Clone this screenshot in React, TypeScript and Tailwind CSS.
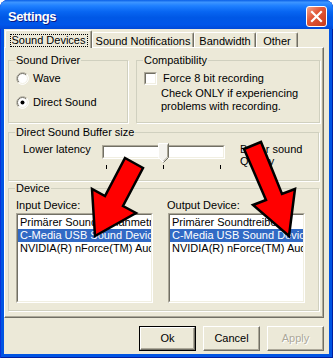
import React from 'react';

function Radio({ checked }: { checked?: boolean }) {
  return (
    <svg width="13" height="13" viewBox="0 0 13 13" className="shrink-0">
      <circle cx="6.5" cy="6.5" r="6" fill="#fff" />
      <path d="M2.26 10.74 A6 6 0 0 1 10.74 2.26" stroke="#ACA899" fill="none" />
      <path d="M10.74 2.26 A6 6 0 0 1 2.26 10.74" stroke="#fff" fill="none" />
      <path d="M2.96 10.04 A5 5 0 0 1 10.04 2.96" stroke="#716F64" fill="none" />
      <path d="M10.04 2.96 A5 5 0 0 1 2.96 10.04" stroke="#F1EFE2" fill="none" />
      {checked && <circle cx="6.5" cy="6.5" r="2" fill="#000" />}
    </svg>
  );
}

function Checkbox() {
  return (
    <div className="w-[13px] h-[13px] shrink-0 border border-t-[#ACA899] border-l-[#ACA899] border-r-white border-b-white">
      <div className="w-full h-full border border-t-[#716F64] border-l-[#716F64] border-r-[#F1EFE2] border-b-[#F1EFE2] bg-white" />
    </div>
  );
}

function ListBox({ items, selected }: { items: string[]; selected: number }) {
  return (
    <div className="mt-[1px] w-[137px] h-[90px] border border-t-[#ACA899] border-l-[#ACA899] border-r-white border-b-white">
      <div className="w-full h-full pt-[1px] bg-white border border-t-[#716F64] border-l-[#716F64] border-r-[#F1EFE2] border-b-[#F1EFE2] overflow-hidden">
        {items.map((it, i) => (
          <div
            key={it}
            className={
              i === selected
                ? 'h-[13px] pl-[2px] whitespace-nowrap overflow-hidden bg-[#316AC5] text-white'
                : 'h-[13px] pl-[2px] whitespace-nowrap overflow-hidden'
            }
          >
            {it}
          </div>
        ))}
      </div>
    </div>
  );
}

function Button({ label, isDefault, disabled }: { label: string; isDefault?: boolean; disabled?: boolean }) {
  const inner =
    'w-full h-full flex items-center justify-center border border-t-white border-l-white border-r-[#716F64] border-b-[#716F64] shadow-[inset_-1px_-1px_0_#ACA899]';
  return (
    <div className={isDefault ? 'w-[57px] h-[25px] border border-black' : 'w-[57px] h-[25px]'}>
      <div className={inner}>
        <span className={disabled ? 'text-[#ACA899] [text-shadow:1px_1px_0_#fff]' : ''}>{label}</span>
      </div>
    </div>
  );
}

export default function App() {
  const inputItems = ['Primärer Soundaufnahmetreiber', 'C-Media USB Sound Device', 'NVIDIA(R) nForce(TM) Audio'];
  const outputItems = ['Primärer Soundtreiber', 'C-Media USB Sound Device', 'NVIDIA(R) nForce(TM) Audio'];

  return (
    <div className="relative w-[333px] h-[358px] overflow-hidden bg-white font-['Liberation_Sans',Arial,sans-serif] text-[11px] leading-[13px] text-black">
      <div className="w-[333px] h-[358px] rounded-t-[8px] bg-[#0054E3] shadow-[inset_1px_0_0_#0831D9,inset_-1px_0_0_#001EA0,inset_0_-1px_0_#001EA0] flex flex-col pb-[4px]">
        {/* Title bar */}
        <div className="h-[29px] shrink-0 rounded-t-[8px] flex items-center justify-between pl-[8px] pr-[6px] pt-[3px] bg-[linear-gradient(to_bottom,#0a5fe6_0%,#3d95ff_8%,#1f80ff_20%,#0866f2_40%,#0058e6_60%,#0056ea_85%,#0049d8_100%)]">
          <span className="text-white font-bold text-[13px] tracking-[-0.4px] [text-shadow:1px_1px_0_#0A1883]">
            Settings
          </span>
          <div className="w-[21px] h-[21px] rounded-[3px] border border-white bg-[linear-gradient(135deg,#f3a58c_0%,#e2593a_40%,#c93a1a_100%)] flex items-center justify-center">
            <svg width="19" height="19" viewBox="0 0 19 19">
              <path d="M5 5 L14 14 M14 5 L5 14" stroke="#fff" strokeWidth="2.2" strokeLinecap="square" />
            </svg>
          </div>
        </div>

        {/* Body */}
        <div className="mx-[4px] h-[325px] bg-[#ECE9D8] flex flex-col">
          {/* Tabs */}
          <div className="h-[18px] flex items-end pl-[1px]">
            <div className="relative z-10 -mb-px h-[18px] w-[87px] bg-[#ECE9D8] rounded-t-[2px] border-l border-t border-white border-r border-r-[#716F64] shadow-[inset_-1px_0_0_#ACA899] flex justify-center items-start pt-[3px]">
              <span className="h-[13px] px-[1px] leading-[11px] border border-dotted border-black">Sound Devices</span>
            </div>
            <div className="h-[15px] w-[102px] rounded-t-[2px] border-l border-t border-white border-r border-r-[#716F64] shadow-[inset_-1px_0_0_#ACA899] flex justify-center items-start pt-[2px]">
              Sound Notifications
            </div>
            <div className="h-[15px] w-[62px] rounded-t-[2px] border-l border-t border-white border-r border-r-[#716F64] shadow-[inset_-1px_0_0_#ACA899] flex justify-center items-start pt-[2px]">
              Bandwidth
            </div>
            <div className="h-[15px] w-[42px] rounded-t-[2px] border-l border-t border-white border-r border-r-[#716F64] shadow-[inset_-1px_0_0_#ACA899] flex justify-center items-start pt-[2px]">
              Other
            </div>
          </div>

          {/* Tab page */}
          <div className="w-[320px] h-[271px] border border-t-white border-l-white border-r-[#716F64] border-b-[#716F64] shadow-[inset_-1px_-1px_0_#ACA899] pl-[3px] pt-[6px] flex flex-col">
            <div className="flex gap-[8px]">
              <fieldset className="w-[120px] h-[69px] border border-[#D0D0BF] shadow-[1px_1px_0_#fff]">
                <legend className="ml-[6px] px-[1px]">Sound Driver</legend>
                <div className="flex items-center gap-[4px] ml-[7px] mt-[5px]">
                  <Radio />
                  <span>Wave</span>
                </div>
                <div className="flex items-center gap-[4px] ml-[7px] mt-[11px]">
                  <Radio checked />
                  <span>Direct Sound</span>
                </div>
              </fieldset>
              <fieldset className="w-[184px] h-[69px] border border-[#D0D0BF] shadow-[1px_1px_0_#fff]">
                <legend className="ml-[6px] px-[1px]">Compatibility</legend>
                <div className="flex items-center gap-[6px] ml-[7px] mt-[5px]">
                  <Checkbox />
                  <span>Force 8 bit recording</span>
                </div>
                <div className="ml-[24px] mt-[2px]">Check ONLY if experiencing</div>
                <div className="ml-[24px]">problems with recording.</div>
              </fieldset>
            </div>

            <fieldset className="mt-[3px] w-[311px] h-[55px] border border-[#D0D0BF] shadow-[1px_1px_0_#fff]">
              <legend className="ml-[6px] px-[1px]">Direct Sound Buffer size</legend>
              <div className="flex items-start pt-[4px] pl-[14px]">
                <div className="w-[79px]">Lower latency</div>
                <div className="relative w-[123px] mt-[2px]">
                  <div className="h-[14px] border border-t-[#ACA899] border-l-[#ACA899] border-r-white border-b-white">
                    <div className="h-full bg-white border border-t-[#716F64] border-l-[#716F64] border-r-[#F1EFE2] border-b-[#F1EFE2]" />
                  </div>
                  <div className="flex justify-between px-[4px] mt-[6px]">
                    <div className="w-[1px] h-[4px] bg-black" />
                    <div className="w-[1px] h-[4px] bg-black" />
                    <div className="w-[1px] h-[4px] bg-black" />
                  </div>
                  <svg className="absolute left-[56px] top-[-2px]" width="11" height="20" viewBox="0 0 11 20">
                    <path d="M0.5 0.5 H10.5 V14.5 L5.5 19.5 L0.5 14.5 Z" fill="#F4F3EE" />
                    <path d="M0.5 14.5 V0.5 H10" stroke="#fff" fill="none" />
                    <path d="M10.5 0.5 V14.5 L5.5 19.5" stroke="#716F64" fill="none" />
                    <path d="M9.5 1.5 V14 L5.5 18" stroke="#ACA899" fill="none" />
                    <path d="M0.5 14.5 L5 19" stroke="#fff" fill="none" />
                  </svg>
                </div>
                <div className="ml-[15px] leading-[12px]">
                  <div>Better sound</div>
                  <div>Quality</div>
                </div>
              </div>
            </fieldset>

            <fieldset className="mt-[1px] w-[311px] h-[129px] border border-[#D0D0BF] shadow-[1px_1px_0_#fff]">
              <legend className="ml-[6px] px-[1px]">Device</legend>
              <div className="flex gap-[15px] pl-[7px] pt-[4px]">
                <div>
                  <div className="h-[13px]">Input Device:</div>
                  <ListBox items={inputItems} selected={1} />
                </div>
                <div>
                  <div className="h-[13px] -ml-[1px]">Output Device:</div>
                  <ListBox items={outputItems} selected={1} />
                </div>
              </div>
            </fieldset>
          </div>

          {/* Buttons */}
          <div className="flex justify-end gap-[7px] pr-[5px] mt-[8px]">
            <Button label="Ok" isDefault />
            <Button label="Cancel" />
            <Button label="Apply" disabled />
          </div>
        </div>
      </div>

      {/* Red arrows drawn over the screenshot */}
      <svg className="absolute left-0 top-0 pointer-events-none" width="333" height="358" viewBox="0 0 333 358">
        <polygon
          points="125,158 143,168 123,206 136,213 95,236 92,189 105,196"
          fill="#FF0000"
          stroke="#000"
          strokeWidth="2.5"
          strokeLinejoin="miter"
        />
        <polygon
          points="244,149 261,142 282,194 295,189 289,236 253,205 266,200"
          fill="#FF0000"
          stroke="#000"
          strokeWidth="2.5"
          strokeLinejoin="miter"
        />
      </svg>
    </div>
  );
}
